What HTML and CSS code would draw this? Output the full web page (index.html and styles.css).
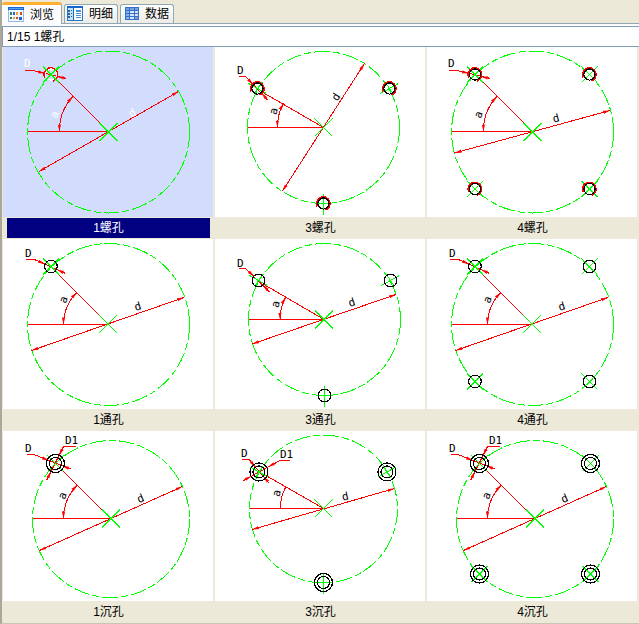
FILE: index.html
```html
<!DOCTYPE html>
<html lang="zh-CN">
<head>
<meta charset="utf-8">
<meta name="viewport" content="width=device-width, initial-scale=1">
<title>浏览</title>
<link rel="stylesheet" href="styles.css">
</head>
<body>
<svg class="defs" aria-hidden="true">
  <defs>
    <marker id="arrow" viewBox="0 0 7 4" refX="7" refY="2" markerWidth="7" markerHeight="4" markerUnits="userSpaceOnUse" orient="auto-start-reverse"><path class="head" d="M0 .4 7 2 0 3.6z"/></marker>
    <g id="diag"><path class="axis" d="M-8-8 8 8M-8 8 8-8"/></g>
    <g id="centre"><path class="axis" d="M-9-9 9 9M-9 9 9-9"/></g>
    <g id="left30"><path class="axis" d="M-9-5 9 5M-4 6 4-6"/></g>
    <g id="right30"><path class="axis" d="M-9 5 9-5M-4-6 4 6"/></g>
    <g id="upright"><path class="axis" d="M0-10V11M-4 0H5"/></g>
    <circle id="hole" class="edge" r="6.3"/>
    <g id="thread"><path class="dim thick" d="M-6 3A6.5 6.5 0 1 1 2 6.2"/><circle class="edge" r="5.6"/></g>
    <g id="sunk"><circle class="edge" r="9"/><circle class="edge" r="6"/></g>
  </defs>
</svg>
<main class="window">
  <nav class="tabs" role="tablist">
    <button class="tab active" role="tab" aria-selected="true">
      <svg class="icon" viewBox="0 0 16 16"><path fill="#f4f8ff" stroke="#94b8e8" d="M.5 1.5h15v13H.5z"/><path fill="#1668d8" d="M0 0h16v3H0z"/><path fill="#58a0f0" d="M1 1h14v1H1z"/><path fill="#208858" d="M2 5h2v3H2zM2 10h2v2H2z"/><path fill="#2860d8" d="M5 5h2v3H5zM11 10h3v3h-3z"/><path fill="#f0a028" d="M8 5h2v3H8zM5 10h2v2H5z"/><path fill="#d84820" d="M12 5h2v3h-2zM8 10h2v2H8z"/></svg>浏览</button>
    <button class="tab" role="tab" aria-selected="false">
      <svg class="icon" viewBox="0 0 16 16"><path fill="#fff" stroke="#2878c8" d="M.5 1.5h15v13H.5z"/><path fill="#1668c8" d="M0 0h16v2H0zM6 2h1v13H6z"/><path fill="#c0e0fc" d="M1 2h5v12H1z"/><path fill="#306090" d="M1 4h2v2H1zM1 7h2v2H1zM1 10h2v2H1zM4 4h1v1H4zM4 7h1v1H4zM4 10h1v1H4z"/><path fill="#4890d8" d="M9 4h5v2H9zM9 7h5v1H9zM9 9h5v1H9zM9 11h5v1H9z"/></svg>明细</button>
    <button class="tab" role="tab" aria-selected="false">
      <svg class="icon" viewBox="0 0 16 16"><path fill="#3470c8" d="M2 1h14v13H2z"/><path fill="#84b4f0" d="M3 5h3v2H3zM3 8h3v2H3zM3 11h3v2H3z"/><path fill="#d8e8fc" d="M7 5h4v2H7zM12 5h3v2h-3zM7 8h4v2H7zM12 8h3v2h-3zM7 11h4v2H7z"/><path fill="#74a0e0" d="M3 2h3v2H3zM7 2h4v2H7zM12 2h3v2h-3zM12 11h3v2h-3z"/></svg>数据</button>
  </nav>
  <input class="status" type="text" aria-label="当前图形" value="1/15 1螺孔" readonly>
  <section class="gallery">
    <button class="tile selected" aria-pressed="true">
      <svg class="drawing" viewBox="3 3 210 170">
        <circle class="pitch" cx="108.5" cy="88" r="81"/>
        <path class="dim" d="M27.5 87.5H108.5L57 36"/>
        <path class="dim arrows" d="M178.5 47.5 39 127.5"/>
        <path class="dim arrows" d="M59.5 87.5A49 49 0 0 1 73 52.5"/>
        <path class="dim" d="M25 26.5H33L66.5 34.5"/>
        <path class="dim end" d="M33 26.5 45 29.5"/><path class="dim end" d="M66.5 34.5 57 32.5"/>
        <use href="#thread" x="51" y="30.5"/><use href="#diag" x="51" y="30.5"/><use href="#centre" x="108.5" y="88"/>
        <text x="24" y="23">D</text><text class="mid" transform="translate(58 72) rotate(-70)">a</text><text class="mid" transform="translate(134 72) rotate(-30)">d</text>
      </svg>
      <span class="caption">1螺孔</span>
    </button>
    <button class="tile" aria-pressed="false">
      <svg class="drawing" viewBox="3 3 210 170">
        <circle class="pitch" cx="111.5" cy="83.5" r="76"/>
        <path class="dim" d="M35.5 83.5H111.5L51 48.5"/>
        <path class="dim arrows" d="M152.5 19.5 70.5 147"/>
        <path class="dim arrows" d="M65.5 83.5A46 46 0 0 1 71.5 59.5"/>
        <path class="dim" d="M26.5 32.5H33.5L55.5 56"/>
        <path class="dim end" d="M33.5 32.5 41 40.5"/><path class="dim end" d="M55.5 56 49.5 49"/>
        <use href="#left30" x="45.5" y="44.5"/><use href="#right30" x="177.5" y="44.5"/><use href="#upright" x="111.5" y="159.5"/><use href="#centre" x="111.5" y="83.5"/>
        <use href="#thread" x="45.5" y="44.5"/><use href="#thread" x="177.5" y="44.5"/><use href="#thread" x="111.5" y="159.5"/>
        <text x="25" y="30">D</text><text class="mid" transform="translate(65 68) rotate(-75)">a</text><text class="mid" transform="translate(127 55) rotate(-57)">d</text>
      </svg>
      <span class="caption">3螺孔</span>
    </button>
    <button class="tile" aria-pressed="false">
      <svg class="drawing" viewBox="3 3 210 170">
        <circle class="pitch" cx="108.5" cy="88" r="81"/>
        <path class="dim" d="M27.5 87.5H108.5L57 36"/>
        <path class="dim arrows" d="M186 66.5 30.5 109"/>
        <path class="dim arrows" d="M59.5 87.5A49 49 0 0 1 73 52.5"/>
        <path class="dim" d="M25 26.5H33L66.5 34.5"/>
        <path class="dim end" d="M33 26.5 45 29.5"/><path class="dim end" d="M66.5 34.5 57 32.5"/>
        <use href="#diag" x="51" y="30.5"/><use href="#diag" x="165.5" y="30.5"/><use href="#diag" x="51" y="145"/><use href="#diag" x="165.5" y="145"/><use href="#centre" x="108.5" y="88"/>
        <use href="#thread" x="51" y="30.5"/><use href="#thread" x="165.5" y="30.5"/><use href="#thread" x="51" y="145"/><use href="#thread" x="165.5" y="145"/>
        <text x="24" y="23">D</text><text class="mid" transform="translate(58 72) rotate(-70)">a</text><text class="mid" transform="translate(133 78) rotate(-15)">d</text>
      </svg>
      <span class="caption">4螺孔</span>
    </button>

    <button class="tile" aria-pressed="false">
      <svg class="drawing" viewBox="3 3 210 170">
        <circle class="pitch" cx="108.5" cy="88.5" r="81"/>
        <path class="dim" d="M27.5 88.5H108.5L57 37"/>
        <path class="dim arrows" d="M184 61.5 31.5 114.5"/>
        <path class="dim arrows" d="M63.5 88.5A45 45 0 0 1 77 56.5"/>
        <path class="dim" d="M26 23.5H34.5L65.5 37.5"/>
        <path class="dim end" d="M34.5 23.5 45 28"/><path class="dim end" d="M65.5 37.5 57 33.5"/>
        <use href="#diag" x="51" y="30.5"/><use href="#centre" x="108" y="88"/><use href="#hole" x="51" y="30.5"/>
        <text x="25" y="21">D</text><text class="mid" transform="translate(67 65) rotate(-70)">a</text><text class="mid" transform="translate(139 74) rotate(-18)">d</text>
      </svg>
      <span class="caption">1通孔</span>
    </button>
    <button class="tile" aria-pressed="false">
      <svg class="drawing" viewBox="3 3 210 170">
        <circle class="pitch" cx="112.5" cy="83.5" r="76"/>
        <path class="dim" d="M36.5 83.5H112L52 48.5"/>
        <path class="dim arrows" d="M184 58.5 40 108"/>
        <path class="dim arrows" d="M68 83.5A44 44 0 0 1 73.5 61.5"/>
        <path class="dim" d="M26.5 32.5H33.5L57.5 56"/>
        <path class="dim end" d="M33.5 32.5 42 40.5"/><path class="dim end" d="M57.5 56 51 49"/>
        <use href="#left30" x="46.5" y="44.5"/><use href="#right30" x="178.5" y="44.5"/><use href="#upright" x="112.5" y="159.5"/><use href="#centre" x="112" y="83.5"/>
        <use href="#hole" x="46.5" y="44.5"/><use href="#hole" x="178.5" y="44.5"/><use href="#hole" x="112.5" y="159.5"/>
        <text x="25" y="31">D</text><text class="mid" transform="translate(67 69) rotate(-75)">a</text><text class="mid" transform="translate(141 70) rotate(-18)">d</text>
      </svg>
      <span class="caption">3通孔</span>
    </button>
    <button class="tile" aria-pressed="false">
      <svg class="drawing" viewBox="3 3 210 170">
        <circle class="pitch" cx="108.5" cy="88.5" r="81"/>
        <path class="dim" d="M27.5 88.5H108.5L57 37"/>
        <path class="dim arrows" d="M184 61.5 31.5 114.5"/>
        <path class="dim arrows" d="M63.5 88.5A45 45 0 0 1 77 56.5"/>
        <path class="dim" d="M26 23.5H34.5L65.5 37.5"/>
        <path class="dim end" d="M34.5 23.5 45 28"/><path class="dim end" d="M65.5 37.5 57 33.5"/>
        <use href="#diag" x="51" y="30.5"/><use href="#diag" x="165.5" y="30.5"/><use href="#diag" x="51" y="145.5"/><use href="#diag" x="165.5" y="145.5"/><use href="#centre" x="108" y="88"/>
        <use href="#hole" x="51" y="30.5"/><use href="#hole" x="165.5" y="30.5"/><use href="#hole" x="51" y="145.5"/><use href="#hole" x="165.5" y="145.5"/>
        <text x="25" y="21">D</text><text class="mid" transform="translate(67 65) rotate(-70)">a</text><text class="mid" transform="translate(139 74) rotate(-18)">d</text>
      </svg>
      <span class="caption">4通孔</span>
    </button>

    <button class="tile" aria-pressed="false">
      <svg class="drawing" viewBox="3 5 210 170">
        <circle class="pitch" cx="111" cy="93" r="78.5"/>
        <path class="dim" d="M32.5 92.5H111M111 93 63 45"/>
        <path class="dim arrows" d="M182.5 60.5 39.5 124.5"/>
        <path class="dim arrows" d="M63.5 92.5A47 47 0 0 1 77.5 59"/>
        <path class="dim" d="M27 28.5H34L70.5 43M75.5 20.5H63.5L46.5 54.5"/>
        <path class="dim end" d="M34 28.5 49 34.5"/><path class="dim end" d="M70.5 43 62 39.5"/><path class="dim end" d="M63.5 20.5 59 29.5"/><path class="dim end" d="M46.5 54.5 51 45.5"/>
        <use href="#diag" x="55.5" y="37.5"/><use href="#centre" x="111" y="92.5"/><use href="#sunk" x="55.5" y="37.5"/>
        <text x="25" y="26">D</text><text x="65" y="18">D1</text><text class="mid" transform="translate(66 71) rotate(-70)">a</text><text class="mid" transform="translate(142 76) rotate(-24)">d</text>
      </svg>
      <span class="caption">1沉孔</span>
    </button>
    <button class="tile" aria-pressed="false">
      <svg class="drawing" viewBox="3 5 210 170">
        <circle class="pitch" cx="111.5" cy="83" r="74"/>
        <path class="dim" d="M37.5 82.5H111.5L53 49"/>
        <path class="dim arrows" d="M182.5 62.5 40 103.5"/>
        <path class="dim" d="M68.5 82.5A43 43 0 0 1 73.5 61.5"/>
        <path class="dim" d="M30 33.5H37L57.5 57.5M78 34.5H68L31.5 54.5"/>
        <path class="dim end" d="M37 33.5 43.5 41"/><path class="dim end" d="M57.5 57.5 51.5 50.5"/><path class="dim end" d="M68 34.5 56 41"/><path class="dim end" d="M31.5 54.5 39.5 50"/>
        <use href="#left30" x="47" y="46"/><use href="#right30" x="175" y="46"/><use href="#upright" x="111.5" y="156.5"/><use href="#centre" x="111.5" y="82.5"/>
        <use href="#sunk" x="47" y="46"/><use href="#sunk" x="175" y="46"/><use href="#sunk" x="111.5" y="156.5"/>
        <text x="29" y="31">D</text><text x="68" y="32">D1</text><text class="mid" transform="translate(68 68) rotate(-75)">a</text><text class="mid" transform="translate(134 74) rotate(-12)">d</text>
      </svg>
      <span class="caption">3沉孔</span>
    </button>
    <button class="tile" aria-pressed="false">
      <svg class="drawing" viewBox="3 5 210 170">
        <circle class="pitch" cx="111" cy="93" r="78.5"/>
        <path class="dim" d="M32.5 92.5H111M111 93 63 45"/>
        <path class="dim arrows" d="M182.5 60.5 39.5 124.5"/>
        <path class="dim arrows" d="M63.5 92.5A47 47 0 0 1 77.5 59"/>
        <path class="dim" d="M27 28.5H34L70.5 43M75.5 20.5H63.5L46.5 54.5"/>
        <path class="dim end" d="M34 28.5 49 34.5"/><path class="dim end" d="M70.5 43 62 39.5"/><path class="dim end" d="M63.5 20.5 59 29.5"/><path class="dim end" d="M46.5 54.5 51 45.5"/>
        <use href="#diag" x="55.5" y="37.5"/><use href="#diag" x="166.5" y="37.5"/><use href="#diag" x="55.5" y="148"/><use href="#diag" x="166.5" y="148"/><use href="#centre" x="111" y="92.5"/>
        <use href="#sunk" x="55.5" y="37.5"/><use href="#sunk" x="166.5" y="37.5"/><use href="#sunk" x="55.5" y="148"/><use href="#sunk" x="166.5" y="148"/>
        <text x="25" y="26">D</text><text x="65" y="18">D1</text><text class="mid" transform="translate(66 71) rotate(-70)">a</text><text class="mid" transform="translate(142 76) rotate(-24)">d</text>
      </svg>
      <span class="caption">4沉孔</span>
    </button>
  </section>
</main>
</body>
</html>
```
FILE: styles.css
```css
* { box-sizing: border-box; }

body {
  margin: 0;
  background: #ece9d8;
  color: #000;
  font-family: "Liberation Sans", "Noto Sans CJK SC", sans-serif;
  font-size: 12px;
}

button, input { font: inherit; color: inherit; }

.defs { position: absolute; width: 0; height: 0; }

.window {
  border-left: 2px solid #aca899;
  border-bottom: 1px solid #c8c5b6;
}

.tabs {
  display: flex;
  align-items: flex-end;
  gap: 2px;
  height: 24px;
  border-bottom: 1px solid #91a7b4;
  box-shadow: 0 2px #fcfcfe;
}

.tab {
  display: flex;
  align-items: center;
  gap: 6px;
  height: 19px;
  padding: 0 4px 0 2px;
  border: 1px solid #91a7b4;
  border-bottom: 0;
  border-radius: 3px 3px 0 0;
  background: linear-gradient(#fff, #ecebe6);
  line-height: 16px;
}

.tab.active {
  height: 22px;
  margin-bottom: -1px;
  padding: 0 7px 0 6px;
  border-top: 3px solid #ffb02e;
  border-left: 0;
  background: #fcfcfe;
}

.icon { flex: none; width: 16px; height: 16px; shape-rendering: crispEdges; }

.status {
  display: block;
  width: 100%;
  height: 21px;
  margin: 2px 0 0;
  padding: 0 4px 2px;
  border: 1px solid #7f9db9;
  border-right: 0;
  border-radius: 0;
  background: #fff;
  outline: 0;
}

.gallery {
  display: grid;
  grid-template-columns: repeat(3, 1fr);
  column-gap: 2px;
  padding: 0 2px 0 1px;
}

.tile {
  display: block;
  min-width: 0;
  padding: 0;
  border: 0;
  background: none;
  text-align: center;
}

.drawing {
  display: block;
  width: 100%;
  background: #fff;
  shape-rendering: crispEdges;
}

.caption {
  display: block;
  height: 20px;
  margin: 1px 3px 1px 4px;
  line-height: 20px;
}

.selected .drawing { background: #d2dcfc; --ink: #fff; }
.selected .caption { background: #000080; color: #fff; }

.pitch { fill: none; stroke: #0f0; stroke-dasharray: 16 3 7 3; }
.axis { fill: none; stroke: #0f0; }
.dim { fill: none; stroke: #f00; }
.thick { stroke-width: 2px; }
.arrows { marker-start: url(#arrow); marker-end: url(#arrow); }
.end { marker-end: url(#arrow); }
.head { fill: #f00; }
.edge { fill: none; stroke: var(--ink, #000); stroke-width: 1.2px; }

.drawing text {
  fill: var(--ink, #000);
  font-family: "DejaVu Sans Mono", monospace;
  font-size: 11px;
}
.drawing .mid { text-anchor: middle; }
```
